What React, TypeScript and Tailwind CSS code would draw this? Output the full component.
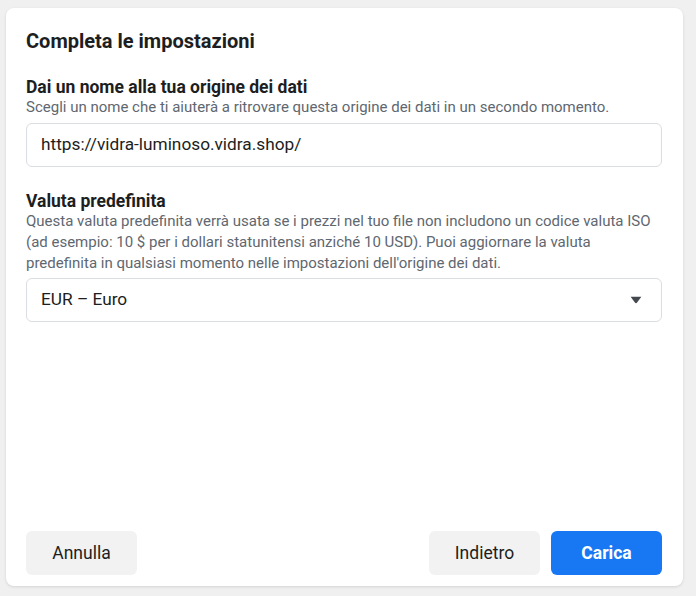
export default function App() {
  return (
    <div className="w-[696px] h-[596px] bg-[#f0f0f0] pl-[6px] pt-[8px] font-['Roboto',sans-serif]">
      <div className="w-[677px] h-[578px] bg-white rounded-lg shadow-[0_1px_3px_rgba(0,0,0,0.12)] flex flex-col pl-5 pr-[21px] pt-[21px] pb-[11px]">
        <h1 className="text-[20px] leading-6 font-bold text-[#1c1e21]">Completa le impostazioni</h1>

        {/* Nome origine */}
        <div className="mt-6 text-[17.5px] leading-5 font-bold text-[#1c1e21]">Dai un nome alla tua origine dei dati</div>
        <div className="text-[15px] leading-5 text-[#606770]">
          Scegli un nome che ti aiuterà a ritrovare questa origine dei dati in un secondo momento.
        </div>
        <div className="mt-[6px] h-[44px] rounded-md border border-[#dadde1] flex items-center px-[14px] text-[17.25px] text-[#1c1e21]">
          https://vidra-luminoso.vidra.shop/
        </div>

        {/* Valuta */}
        <div className="mt-6 text-[17.5px] leading-5 font-bold text-[#1c1e21]">Valuta predefinita</div>
        <div className="text-[15px] leading-[21px] text-[#606770]">
          Questa valuta predefinita verrà usata se i prezzi nel tuo file non includono un codice valuta ISO (ad esempio: 10 $ per i dollari statunitensi anziché 10 USD). Puoi aggiornare la valuta predefinita in qualsiasi momento nelle impostazioni dell'origine dei dati.
        </div>
        <div className="mt-1 h-[44px] rounded-md border border-[#dadde1] flex items-center justify-between pl-[14px] pr-[19px] text-[17.25px] text-[#1c1e21]">
          <span>EUR – Euro</span>
          <svg width="12" height="8" viewBox="0 0 12 8" fill="#444950">
            <path d="M0.6 0.8 H11.4 L7.1 6.6 Q6 7.9 4.9 6.6 Z" />
          </svg>
        </div>

        <div className="flex-1" />

        {/* Footer */}
        <div className="flex items-center gap-[11px]">
          <button className="h-[44px] w-[111px] rounded-md bg-[#f2f2f2] text-[17.5px] text-[#1c1e21]">Annulla</button>
          <div className="flex-1" />
          <button className="h-[44px] w-[111px] rounded-md bg-[#f2f2f2] text-[17.5px] text-[#1c1e21]">Indietro</button>
          <button className="h-[44px] w-[111px] rounded-md bg-[#1877f2] text-[17.5px] font-bold text-white">Carica</button>
        </div>
      </div>
    </div>
  );
}
